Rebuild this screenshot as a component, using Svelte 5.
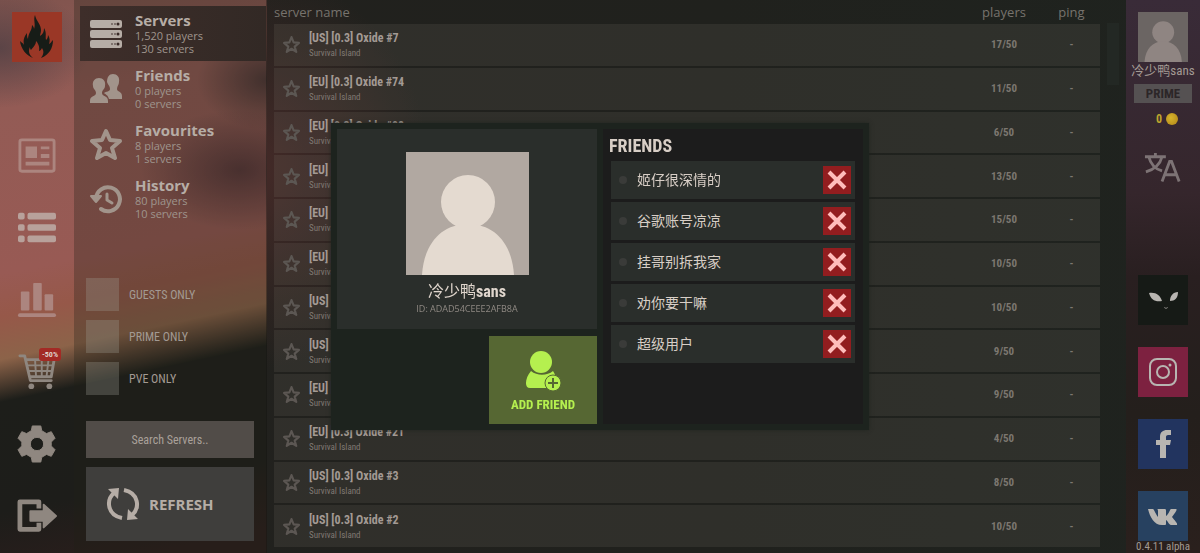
<script>
  const servers = [
    { name: '[US] [0.3] Oxide #7', players: 17 },
    { name: '[EU] [0.3] Oxide #74', players: 11 },
    { name: '[EU] [0.3] Oxide #98', players: 6 },
    { name: '[EU] [0.3] Oxide #62', players: 13 },
    { name: '[EU] [0.3] Oxide #55', players: 15 },
    { name: '[EU] [0.3] Oxide #47', players: 10 },
    { name: '[US] [0.3] Oxide #12', players: 10 },
    { name: '[US] [0.3] Oxide #9', players: 9 },
    { name: '[EU] [0.3] Oxide #33', players: 9 },
    { name: '[EU] [0.3] Oxide #21', players: 4 },
    { name: '[US] [0.3] Oxide #3', players: 8 },
    { name: '[US] [0.3] Oxide #2', players: 10 }
  ];

  const lists = [
    { id: 'servers', title: 'Servers', players: '1,520', servers: 130 },
    { id: 'friends', title: 'Friends', players: '0', servers: 0 },
    { id: 'favourites', title: 'Favourites', players: '8', servers: 1 },
    { id: 'history', title: 'History', players: '80', servers: 10 }
  ];

  const filters = ['GUESTS ONLY', 'PRIME ONLY', 'PVE ONLY'];

  let current = 'servers';
  let friends = ['姬仔很深情的', '谷歌账号凉凉', '挂哥别拆我家', '劝你要干嘛', '超级用户'];

  function removeFriend(name) {
    friends = friends.filter(f => f !== name);
  }
</script>

<div class="lobby">
  <div class="left">
    <nav class="rail">
      <a class="logo" href="#home" aria-label="Oxide">
        <svg viewBox="0 0 50 50">
          <path fill="#171c17" d="M21 46C14 43 9 37 8 29c2 2 3 2 4 4-1-5 0-8 3-12 0 3 0 4 1 6 0-6 4-8 4-14 1 1 2 2 2 4 2-5-1-9 1-14 1 6 6 9 6 15 0 3-1 4-1 6 3-2 4-4 4-8 3 5 1 8 2 12 1-1 2-2 2-5 2 3 2 6 1 9 2-1 2-2 4-4 0 8-4 15-12 18 3-4 3-7 1-10-1 2-2 3-3 3 1-4-1-8-3-10 0 4-3 6-5 9-1-1-1-2-1-3-2 4-1 8 3 11z" />
        </svg>
      </a>
      <div class="rail-items">
        <button class="rail-item faded" aria-label="News">
          <svg viewBox="0 0 40 40"><path fill="none" stroke="currentColor" stroke-width="3" d="M4 3h32a2 2 0 0 1 2 2v29a2 2 0 0 1-2 2H4a2 2 0 0 1-2-2V5a2 2 0 0 1 2-2z" /><path fill="currentColor" d="M8 10h12v12H8zM24 10h9v3h-9zM24 18h9v4h-9zM8 26h25v4H8z" /></svg>
        </button>
        <button class="rail-item bright" aria-label="Servers">
          <svg viewBox="0 0 40 40" fill="currentColor"><rect x="0" y="4" width="7" height="7" rx="2" /><rect x="10" y="4" width="30" height="7" rx="2" /><rect x="0" y="16" width="7" height="7" rx="2" /><rect x="10" y="16" width="30" height="7" rx="2" /><rect x="0" y="28" width="7" height="7" rx="2" /><rect x="10" y="28" width="30" height="7" rx="2" /></svg>
        </button>
        <button class="rail-item faded" aria-label="Statistics">
          <svg viewBox="0 0 40 40" fill="currentColor"><rect x="3" y="11" width="9" height="20" rx="1" /><rect x="16" y="2" width="9" height="29" rx="1" /><rect x="28" y="14" width="9" height="17" rx="1" /><rect x="0" y="34" width="40" height="4" rx="2" /></svg>
        </button>
        <button class="rail-item" aria-label="Shop">
          <svg viewBox="0 0 40 40"><path fill="none" stroke="currentColor" stroke-width="3" stroke-linecap="round" stroke-linejoin="round" d="M2 3h5l6 26h22M8 7h30l-3 18H12" /><path fill="none" stroke="currentColor" stroke-width="2" d="M9 13h28M10 19h26M18 8l1 17M25 8v17M32 8l-2 17" /><circle cx="14" cy="35" r="3" fill="currentColor" /><circle cx="33" cy="35" r="3" fill="currentColor" /></svg>
          <span class="sale">-50%</span>
        </button>
        <button class="rail-item" aria-label="Settings">
          <svg viewBox="0 0 40 40"><path fill="currentColor" stroke="currentColor" stroke-linejoin="round" fill-rule="evenodd" d="M15 1h9l1 5 5 3 5-2 4 7-4 4v4l4 4-4 7-5-2-5 3-1 5h-9l-1-5-5-3-5 2-4-7 4-4v-4l-4-4 4-7 5 2 5-3zM20 13a7 7 0 1 0 0 14 7 7 0 0 0 0-14z" /></svg>
        </button>
        <button class="rail-item" aria-label="Exit">
          <svg viewBox="0 0 40 40"><path fill="none" stroke="currentColor" stroke-width="5" stroke-linejoin="round" d="M22 12V5H2v29h20v-7" /><path fill="currentColor" stroke="currentColor" stroke-width="2" stroke-linejoin="round" d="M13 15h14V8l13 12-13 12v-7H13z" /></svg>
        </button>
      </div>
    </nav>

    <aside class="sidebar">
      <div class="lists">
        {#each lists as list}
          <button class="list" class:active={list.id === current} on:click={() => (current = list.id)}>
            <svg class="list-icon" viewBox="0 0 32 32">
              {#if list.id === 'servers'}
                <g fill="currentColor"><rect y="2" width="32" height="8" rx="2" /><rect y="12" width="32" height="8" rx="2" /><rect y="22" width="32" height="8" rx="2" /></g>
                <g fill="#3a2b28">
                  {#each [6, 16, 26] as y}
                    <circle cx="28" cy={y} r="1.500" /><circle cx="25" cy={y} r="0.800" /><circle cx="22" cy={y} r="0.800" />
                  {/each}
                </g>
              {:else if list.id === 'friends'}
                <path fill="currentColor" d="M23 1c4 0 7 3 6 8 0 3-2 4-2 7 0 3 5 2 5 7v3H19c-1-4-4-5-5-6 2-2 6-1 6-4s-2-4-3-7c0-5 2-8 6-8z" />
                <path fill="currentColor" d="M9 5c4 0 7 3 6 8 0 3-3 4-3 7 0 4 6 2 6 8v2H0v-2c0-6 6-4 6-8 0-3-3-4-3-7-1-5 2-8 6-8z" />
              {:else if list.id === 'favourites'}
                <path fill="none" stroke="currentColor" stroke-width="4" stroke-linejoin="round" d="m16 3 4 9 10 1-8 7 3 10-9-5-9 5 3-10-8-7 10-1z" />
              {:else}
                <path fill="none" stroke="currentColor" stroke-width="4" stroke-linecap="round" d="M6 15a12 12 0 1 1 5 11" />
                <path fill="currentColor" stroke="currentColor" stroke-width="2" stroke-linejoin="round" d="M1 13h10l-5 6z" />
                <path fill="none" stroke="currentColor" stroke-width="3" stroke-linecap="round" stroke-linejoin="round" d="M17 11v6l5 3" />
              {/if}
            </svg>
            <span class="list-text">
              <strong>{list.title}</strong>
              <span>{list.players} players</span>
              <span>{list.servers} servers</span>
            </span>
          </button>
        {/each}
      </div>

      <div class="filters">
        {#each filters as filter}
          <label><input type="checkbox" />{filter}</label>
        {/each}
      </div>

      <input class="search" type="text" placeholder="Search Servers.." aria-label="Search Servers" />
      <button class="refresh">
        <svg viewBox="0 0 34 34">
          <path fill="none" stroke="currentColor" stroke-width="4" d="M8 6C0 13 1 28 16 31M18 3c15 3 16 18 8 25" />
          <path fill="currentColor" d="M2 2l11-1-1 11zM32 32l-11 1 1-11z" />
        </svg>
        REFRESH
      </button>
    </aside>
  </div>

  <main>
    <table>
      <thead>
        <tr><th class="name" colspan="2">server name</th><th class="players">players</th><th class="ping">ping</th></tr>
      </thead>
      <tbody>
        {#each servers as server}
          <tr>
            <td class="fav">
              <button aria-label="Favourite">
                <svg viewBox="0 0 16 16"><path fill="none" stroke="currentColor" stroke-width="2" stroke-linejoin="round" d="m8 1 2 5 5 .5-4 3.500 1.500 5L8 12l-4.500 3L5 10 1 6.500 6 6z" /></svg>
              </button>
            </td>
            <td class="name"><strong>{server.name}</strong><span>Survival Island</span></td>
            <td class="players">{server.players}/50</td>
            <td class="ping">-</td>
          </tr>
        {/each}
      </tbody>
    </table>
    <div class="scroll-thumb"></div>
  </main>

  <aside class="account">
    <svg class="avatar small" viewBox="0 0 123 123">
      <rect width="123" height="123" fill="#6b6563" />
      <circle cx="62" cy="50" r="27" fill="#8f8582" /><path fill="#8f8582" d="M16 123c2-32 20-51 46-51s44 19 46 51z" />
    </svg>
    <span class="me">冷少鸭sans</span>
    <button class="prime">PRIME</button>
    <span class="coins">0 <i></i></span>
    <button class="language" aria-label="Language">
      <svg viewBox="0 0 40 32" fill="none" stroke="currentColor" stroke-width="3"><path d="M1 5h22M12 1v4M5 5c2 8 7 13 14 15M19 5C17 13 12 18 2 21M19 31l8-21h2l8 21M22 24h13" /></svg>
    </button>
    <div class="social">
      <a class="alien" href="#community" aria-label="Community">
        <svg viewBox="0 0 50 50" fill="#b8b5b1"><path d="M11 18c7-1 11 2 13 8-7 1-11-1-13-8zM40 17c0 6-3 9-8 9 0-5 3-9 8-9z" /><path d="M26 32l2 1 2-1c-1 2-3 2-4 0z" /></svg>
      </a>
      <a class="instagram" href="#instagram" aria-label="Instagram">
        <svg viewBox="0 0 50 50" fill="none" stroke="#b8b5b1" stroke-width="2"><rect x="12" y="12" width="26" height="26" rx="7" /><circle cx="25" cy="25" r="6" /><circle cx="32" cy="18" r="1.500" fill="#b8b5b1" stroke="none" /></svg>
      </a>
      <a class="facebook" href="#facebook" aria-label="Facebook">
        <svg viewBox="0 0 50 50"><path fill="#b8b5b1" d="M22 39V26h-4v-5h4v-3c0-5 3-7 7-7h4v5h-2c-3 0-3 1-3 3v2h5l-1 5h-4v13z" /></svg>
      </a>
      <a class="vk" href="#vk" aria-label="VK">
        <svg viewBox="0 0 50 50"><path fill="#b8b5b1" d="M10 18h5c1 0 2 4 5 8V20c0-2-1-2-1-2h8c1 0 1 1 1 2v5c3-2 4-7 5-7h5c2 0-1 4-4 8 2 3 6 6 5 8h-6c-2 0-3-4-5-5v4c0 1-1 1-2 1h-2c-8 0-12-8-14-16z" /></svg>
      </a>
    </div>
    <span class="version">0.4.11 alpha</span>
  </aside>
</div>

<div class="overlay">
  <div class="dialog" role="dialog" aria-label="Profile">
    <section class="profile">
      <div class="card">
        <svg class="avatar" viewBox="0 0 123 123">
          <rect width="123" height="123" fill="#b1a8a1" />
          <circle cx="62" cy="50" r="27" fill="#e4dad0" /><path fill="#e4dad0" d="M16 123c2-32 20-51 46-51s44 19 46 51z" />
        </svg>
        <h2>冷少鸭<b>sans</b></h2>
        <p>ID: ADAD54CEEE2AFB8A</p>
      </div>
      <button class="add">
        <svg viewBox="0 0 36 40" fill="currentColor"><path d="M6 20c6 5 16 5 22 0 2 3 3 6 3 8-8 0-9 6-7 9H5c-6 0-5-10 1-17z" /><circle cx="16" cy="11" r="11" /><circle cx="28" cy="32" r="8" stroke="#566733" stroke-width="1" /><path fill="none" stroke="#566733" stroke-width="2" d="M23 32h10M28 27v10" /></svg>
        ADD FRIEND
      </button>
    </section>
    <section class="friends">
      <h3>FRIENDS</h3>
      <ul>
        {#each friends as friend}
          <li>
            <i></i>
            <span>{friend}</span>
            <button aria-label="Remove {friend}" on:click={() => removeFriend(friend)}>
              <svg viewBox="0 0 28 28"><path fill="none" stroke="#ffbdbb" stroke-width="4" d="m6 6 16 16M22 6 6 22" /></svg>
            </button>
          </li>
        {/each}
      </ul>
    </section>
  </div>
</div>

<style>
  :global(body) {
    margin: 0;
    background: #20211e;
  }

  .lobby, .overlay {
    --condensed: 'Roboto Condensed', 'Liberation Sans Narrow', Roboto, 'Noto Sans CJK SC', sans-serif;
    --open: 'Open Sans', 'Noto Sans CJK SC', sans-serif;
    font-family: var(--condensed);
    color: #a39a93;
  }

  * {
    box-sizing: border-box;
  }

  button {
    padding: 0;
    border: 0;
    background: none;
    color: inherit;
    font: inherit;
    cursor: pointer;
  }

  svg {
    display: block;
  }

  .lobby {
    display: grid;
    grid-template-columns: 267px 1fr 74px;
    min-height: 100vh;
    background:
      radial-gradient(ellipse 180px 200px at 250px 170px, rgba(84, 46, 44, 0.700), transparent),
      linear-gradient(to right, #22211e, #20211d 60%, #1f231f);
  }

  .left {
    display: grid;
    grid-template-columns: 74px 1fr;
    background:
      radial-gradient(ellipse 90px 60px at 0 48px, rgba(72, 60, 66, 0.700), transparent),
      radial-gradient(ellipse 70px 50px at 267px 80px, rgba(50, 40, 42, 0.700), transparent),
      radial-gradient(ellipse 100px 60px at 240px 170px, rgba(50, 32, 40, 0.600), transparent),
      linear-gradient(168deg, #80544e 0%, #935b55 18%, #985a54 45%, #965849 52%, #8c6349 59%, #1d1e1a 66%, #1d1d1a 84%, #2a1e1c 96%);
  }

  .rail {
    display: flex;
    flex-direction: column;
    align-items: center;
    justify-content: space-between;
    padding-top: 12px;
  }

  .logo {
    width: 50px;
    background: #9a3726;
  }

  .rail-items {
    display: flex;
    flex-direction: column;
    padding-bottom: 1px;
  }

  .rail-item {
    position: relative;
    display: grid;
    place-items: center;
    width: 74px;
    height: 72px;
    color: #8f8780;
  }

  .rail-item svg {
    width: 38px;
    height: 38px;
    overflow: visible;
  }

  .rail-item.faded {
    color: #ac857f;
  }

  .rail-item.bright {
    color: #b8a19b;
  }

  .sale {
    position: absolute;
    top: 12px;
    right: 13px;
    padding: 0 3px;
    border-radius: 3px;
    background: #a32a25;
    color: #ddd0c8;
    font: bold 8px/13px var(--condensed);
  }

  .sidebar {
    display: flex;
    flex-direction: column;
    padding: 6px 0 12px 6px;
    background: rgba(32, 34, 24, 0.300);
    border-right: 1px solid rgba(20, 20, 18, 0.400);
  }

  .lists {
    display: flex;
    flex-direction: column;
  }

  .list {
    display: flex;
    align-items: center;
    gap: 13px;
    height: 55px;
    padding-left: 10px;
    text-align: left;
    color: #a2948b;
  }

  .list.active {
    background: linear-gradient(to right, #3e2e2a, #322925);
    color: #b6ada6;
  }

  .list-icon {
    width: 32px;
    height: 32px;
  }

  .list-text {
    display: flex;
    flex-direction: column;
    font: 11px/13px var(--open);
    color: #9f958d;
  }

  .list-text strong {
    font-size: 15px;
    line-height: 17px;
    color: #b6ada6;
  }

  .filters {
    display: flex;
    flex-direction: column;
    gap: 9px;
    margin-top: auto;
    padding-left: 6px;
  }

  .filters label {
    display: flex;
    align-items: center;
    gap: 10px;
    font-size: 12px;
  }

  .filters input {
    appearance: none;
    width: 33px;
    height: 33px;
    margin: 0;
    background: rgba(160, 160, 150, 0.300);
  }

  .search {
    height: 37px;
    margin: 26px 12px 9px 6px;
    border: 0;
    background: #514c48;
    color: #b3aaa3;
    font: 12px var(--condensed);
    text-align: center;
  }

  .search::placeholder {
    color: #aaa19a;
  }

  .refresh {
    display: flex;
    align-items: center;
    gap: 9px;
    height: 74px;
    margin: 0 12px 0 6px;
    padding-left: 20px;
    background: #3f3e3c;
    color: #b6ada6;
    font: bold 15px var(--open);
  }

  .refresh svg {
    width: 34px;
  }

  main {
    display: flex;
    align-items: flex-start;
    gap: 7px;
    padding: 0 7px;
  }

  table {
    flex: 1;
    height: calc(100vh - 4px);
    border-spacing: 0;
    table-layout: fixed;
  }

  th {
    height: 24px;
    padding: 0;
    font: 13px/22px var(--open);
    color: #77736d;
  }

  th.name {
    text-align: left;
  }

  td {
    padding: 0;
    border-bottom: 2px solid transparent;
    background: rgba(130, 122, 112, 0.160);
    background-clip: padding-box;
  }

  .fav {
    width: 35px;
    color: #5c5753;
  }

  .fav button {
    display: block;
    margin-left: 9px;
  }

  .fav svg {
    width: 17px;
  }

  td.name {
    padding-top: 3px;
  }

  td.name strong, td.name span {
    display: block;
  }

  td.name strong {
    font-size: 12px;
    line-height: 15px;
    color: #a39a94;
  }

  td.name span {
    font-size: 9px;
    line-height: 15px;
    color: #807973;
  }

  .players {
    width: 78px;
    text-align: center;
  }

  .ping {
    width: 57px;
    text-align: center;
  }

  td.players, td.ping {
    font-size: 11px;
    font-weight: bold;
    color: #7c7770;
  }

  .scroll-thumb {
    width: 12px;
    height: 62px;
    margin-top: 23px;
    background: #232824;
  }

  .account {
    display: flex;
    flex-direction: column;
    align-items: center;
    padding-top: 12px;
    background: linear-gradient(#392b38, #35262c 35%, #291f20 50%, #241f1c 75%, #2a201d);
  }

  .avatar {
    width: 123px;
  }

  .avatar.small {
    width: 50px;
  }

  .me {
    font-size: 13px;
    line-height: 18px;
    white-space: nowrap;
  }

  .prime {
    width: 58px;
    height: 19px;
    margin-top: 4px;
    background: #555152;
    color: #2c2628;
    font-size: 13px;
    font-weight: bold;
  }

  .coins {
    display: flex;
    align-items: center;
    gap: 4px;
    margin-top: 8px;
    padding-left: 8px;
    font: bold 12px/16px var(--condensed);
    color: #bda62e;
  }

  .coins i {
    width: 12px;
    height: 12px;
    border-radius: 50%;
    background: radial-gradient(circle at 40% 40%, #d6b52c, #b08418);
  }

  .language {
    margin-top: 25px;
    color: #7d7375;
  }

  .language svg {
    width: 38px;
  }

  .social {
    display: flex;
    flex-direction: column;
    gap: 22px;
    margin-top: auto;
  }

  .social a {
    width: 50px;
    height: 50px;
  }

  .alien {
    background: #161a16;
  }

  .instagram {
    background: #7d2140;
  }

  .facebook {
    background: #22345f;
  }

  .vk {
    background: #274160;
  }

  .version {
    font-size: 11px;
    line-height: 12px;
    white-space: nowrap;
  }

  .overlay {
    position: fixed;
    inset: 0;
    display: grid;
    place-items: center;
    pointer-events: none;
  }

  .dialog {
    display: flex;
    gap: 6px;
    padding: 6px;
    background: #1d231e;
    box-shadow: 0 0 4px rgba(29, 35, 30, 0.800);
    pointer-events: auto;
  }

  .profile {
    display: flex;
    flex-direction: column;
    align-items: flex-end;
    gap: 7px;
    width: 260px;
  }

  .card {
    display: flex;
    flex-direction: column;
    align-items: center;
    align-self: stretch;
    height: 200px;
    padding-top: 23px;
    background: #2a2e2b;
  }

  h2 {
    margin: 6px 0 0;
    font-size: 16px;
    font-weight: normal;
    line-height: 22px;
    color: #e0d6cd;
  }

  .card p {
    margin: 0;
    font: 9px/12px var(--open);
    color: #8f8983;
  }

  .add {
    display: flex;
    flex-direction: column;
    align-items: center;
    gap: 6px;
    width: 108px;
    height: 88px;
    padding-top: 15px;
    background: #566733;
    color: #b5f04f;
    font-size: 13px;
    font-weight: bold;
  }

  .add svg {
    width: 36px;
  }

  .friends {
    width: 260px;
    padding: 6px 8px 0 6px;
    background: #1c1c1c;
  }

  h3 {
    margin: 0;
    font-size: 18px;
    line-height: 22px;
    color: #d8cec6;
  }

  ul {
    display: flex;
    flex-direction: column;
    gap: 3px;
    margin: 4px 0 0 2px;
    padding: 0;
    list-style: none;
  }

  li {
    display: flex;
    align-items: center;
    height: 38px;
    padding: 0 4px 0 8px;
    background: #2a2e2b;
  }

  li i {
    width: 8px;
    height: 8px;
    border-radius: 50%;
    background: #3a3b39;
  }

  li span {
    flex: 1;
    margin-left: 10px;
    font-size: 14px;
    line-height: 20px;
    color: #d8cec6;
  }

  li button {
    width: 28px;
    height: 28px;
    background: #921d1f;
  }
</style>
